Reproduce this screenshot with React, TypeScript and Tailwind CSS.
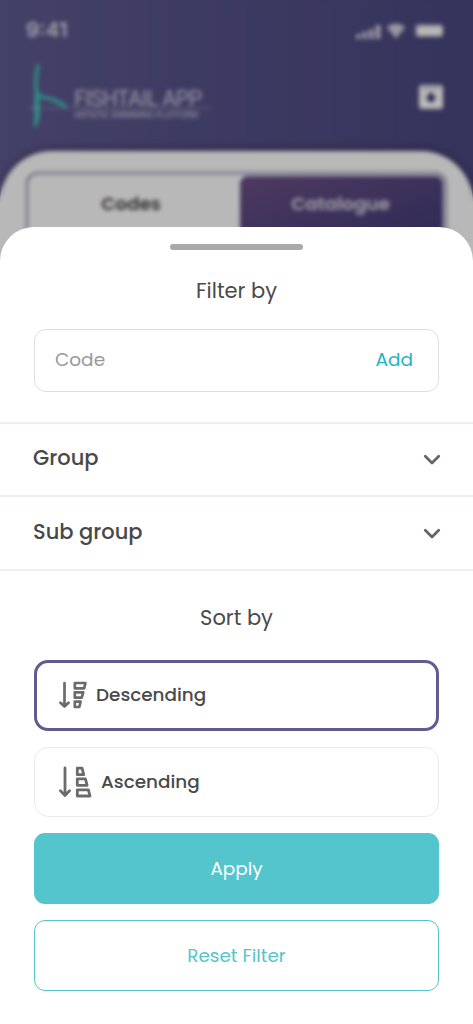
import React, { useState } from 'react';

type SortOrder = 'desc' | 'asc';

const StatusIcons = () => (
  <svg width="90" height="20" viewBox="0 0 90 20" fill="#fff">
    <g opacity="0.75">
      <rect x="0" y="14" width="4.5" height="5" rx="1" />
      <rect x="6.5" y="11.5" width="4.5" height="7.5" rx="1" />
      <rect x="13" y="9" width="4.5" height="10" rx="1" />
      <rect x="19.5" y="5" width="5" height="14" rx="1" />
    </g>
    <path d="M40 18.5 L30.5 7 Q40 0 49.5 7 Z" opacity="0.75" />
    <rect x="59" y="4" width="28" height="13" rx="4" fill="none" stroke="#fff" opacity="0.4" />
    <rect x="60.5" y="5.5" width="26" height="10.5" rx="2" />
  </svg>
);

const Logo = () => (
  <svg width="190" height="68" viewBox="0 0 190 68" fill="none">
    <g stroke="#41c9bd" strokeLinecap="round" strokeLinejoin="round">
      <path d="M14 3 Q10.5 15 13 32 Q14 47 11.5 62" strokeWidth="3.5" />
      <path d="M13 30 V56" strokeWidth="5" />
      <path d="M14 33 Q29 35 41 43" strokeWidth="3.5" />
    </g>
    <path d="M4 45 H188" stroke="#fff" strokeWidth="1" opacity="0.4" />
    <text x="50" y="42.5" fill="#fff" opacity="0.7" fontSize="21.5" fontFamily="Roboto, sans-serif" textLength="128">FISHTAIL APP</text>
    <text x="50" y="54.5" fill="#fff" opacity="0.7" fontSize="8.5" fontFamily="Roboto, sans-serif" textLength="124">ARTISTIC SWIMMING PLATFORM</text>
  </svg>
);

const ArchiveIcon = () => (
  <svg width="26" height="26" viewBox="0 0 26 26">
    <rect x="1" y="1" width="24" height="24" rx="3" fill="#fff" />
    <path d="M4 4 H22" stroke="#4b4780" strokeWidth="1.5" opacity="0.5" />
    <path d="M10.5 9 H15.5 V13 H19 L13 19 L7 13 H10.5 Z" fill="#37336a" />
  </svg>
);

const ChevronIcon = () => (
  <svg width="18" height="12" viewBox="0 0 18 12" fill="none" stroke="#666" strokeWidth="2.8" strokeLinecap="round" strokeLinejoin="round">
    <path d="M2.3 2.3 L9 8.9 L15.7 2.3" />
  </svg>
);

const DescendingIcon = () => (
  <svg width="28" height="28" viewBox="0 0 28 28" fill="none" stroke="#6b6b6b" strokeWidth="2.7" strokeLinecap="round" strokeLinejoin="round">
    <path d="M5.5 2 V25.5 M1.5 21.8 L5.5 25.6 L9.5 21.8" />
    <path d="M15.8 2 H26.4 L25.2 7.3 H15.8 Z" />
    <path d="M15.8 11.3 H24.2 L22.7 16.7 H15.8 Z" />
    <path d="M15.8 20.6 H21.6 L20.3 26 H15.8 Z" />
  </svg>
);

const AscendingIcon = () => (
  <svg width="33" height="32" viewBox="0 0 33 32" fill="none" stroke="#6b6b6b" strokeWidth="2.8" strokeLinecap="round" strokeLinejoin="round">
    <path d="M6 2 V29.5 M1.5 24.8 L6 29.6 L10.5 24.8" />
    <path d="M18.3 2.2 H23 L24.8 8.7 H18.3 Z" />
    <path d="M18.3 12.8 H26.4 L28.1 19.3 H18.3 Z" />
    <path d="M18.3 23.8 H29.4 L31 30 H18.3 Z" />
  </svg>
);

const FilterRow = ({ label }: { label: string }) => (
  <button className="flex h-[73.7px] w-full items-center justify-between border-t-2 border-[#ebeff5] pl-[33px] pr-8 pt-px text-left">
    <span className="pb-1 text-[21px] font-medium text-[#484848]">{label}</span>
    <ChevronIcon />
  </button>
);

const App: React.FC = () => {
  const [code, setCode] = useState('');
  const [order, setOrder] = useState<SortOrder>('desc');

  return (
    <div className="h-[1024px] w-[473px] overflow-hidden bg-white font-[Poppins,Inter,sans-serif] text-[#4a4a4a]">
      <header className="relative h-[277px] overflow-hidden bg-linear-to-r from-[#5f5a90] to-[#4b4780]">
        <div className="flex items-center justify-between pl-[26px] pr-[27px] pt-[18px] text-white">
          <span className="font-[Inter,sans-serif] text-[20.5px] font-semibold leading-6 opacity-80">9:41</span>
          <StatusIcons />
        </div>
        <div className="mt-[21px] flex items-center justify-between pl-6 pr-[29px]">
          <Logo />
          <ArchiveIcon />
        </div>
        <div className="mt-5 h-[140px] rounded-t-[52px] bg-white px-[26px] pt-[21px] shadow-[0_-2px_8px_rgba(0,0,0,0.3)]">
          <div className="flex h-[75px] rounded-xl border-2 border-[#8b87aa] p-0.5 text-[18.3px] font-semibold">
            <div className="flex w-[210px] items-start justify-center pr-2 pt-[14px] text-[#444]">Codes</div>
            <div className="flex flex-1 items-start justify-center rounded-lg bg-linear-to-br from-[#6c5085] to-[#3e3b78] pr-0.5 pt-[14px] text-white/80">
              Catalogue
            </div>
          </div>
        </div>
        <div className="absolute inset-0 bg-black/28 backdrop-blur-[2px]" />
      </header>

      <main className="relative -mt-[50px] h-[797px] rounded-t-[34px] bg-white">
        <div className="flex justify-center pt-[17px]">
          <div className="h-[5.5px] w-[133px] rounded-full bg-[#a9a9a9]" />
        </div>
        <h2 className="mt-[25px] text-center text-[21px] leading-8">Filter by</h2>
        <div className="mx-[34px] mt-[22px] flex h-[63px] items-center justify-between rounded-xl border border-[#dedede] pl-5 pr-[25px] text-[18.5px]">
          <input
            value={code}
            onChange={e => setCode(e.target.value)}
            placeholder="Code"
            className="w-40 outline-none placeholder:text-[#999]"
          />
          <button className="text-[#1eb5bf]">Add</button>
        </div>

        <div className="mt-[30px] border-b-2 border-[#ebeff5]">
          <FilterRow label="Group" />
          <FilterRow label="Sub group" />
        </div>

        <h2 className="mt-[31.5px] text-center text-[21px] leading-8">Sort by</h2>
        <div className="mx-[34px] mt-[25.5px] flex flex-col gap-4 text-[18.4px]">
          <button
            onClick={() => setOrder('desc')}
            className={`flex h-[70.7px] items-center gap-[9px] rounded-[14px] pl-[22px] font-medium ${order === 'desc' ? 'border-[3px] border-[#615b8f]' : 'border border-[#eaeaea]'}`}
          >
            <DescendingIcon />
            Descending
          </button>
          <button
            onClick={() => setOrder('asc')}
            className={`flex h-[70.7px] items-center gap-[9px] rounded-[14px] pl-6 font-medium ${order === 'asc' ? 'border-[3px] border-[#615b8f]' : 'border border-[#eaeaea]'}`}
          >
            <AscendingIcon />
            Ascending
          </button>
          <button className="h-[70.7px] rounded-[11px] bg-[#54c4cd] text-white">Apply</button>
          <button className="h-[70.7px] rounded-[11px] border border-[#54c4cd] pt-px text-[#54c4cd]">Reset Filter</button>
        </div>
      </main>
    </div>
  );
};

export default App;
